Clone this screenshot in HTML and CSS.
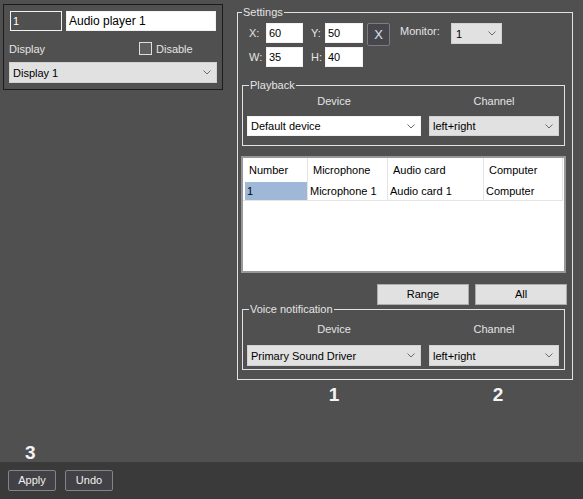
FILE: index.html
```html
<!DOCTYPE html>
<html>
<head>
<meta charset="utf-8">
<link rel="stylesheet" href="styles.css">
</head>
<body>
<div class="app">
  <div class="main">
    <div class="left-col">
      <div class="panel">
        <div class="row">
          <input class="field id-field" value="1" readonly>
          <input class="field name-field" value="Audio player 1" readonly>
        </div>
        <div class="row display-row">
          <span class="display-label">Display</span>
          <span class="checkbox"></span>
          <span class="check-label">Disable</span>
        </div>
        <div class="select display-select">
          <span>Display 1</span>
          <svg class="chev" width="8" height="5" viewBox="0 0 8 5"><polyline points="0.5,0.5 4,4 7.5,0.5" fill="none" stroke="#6a6a6a"/></svg>
        </div>
      </div>
      <div class="num num3">3</div>
    </div>
    <div class="right-col">
      <fieldset class="group settings">
        <legend>Settings</legend>
        <div class="coord-row first">
          <span class="lbl lbl-x">X:</span>
          <input class="field f37" value="60" readonly>
          <span class="lbl lbl-y">Y:</span>
          <input class="field f38" value="50" readonly>
          <div class="xbtn">X</div>
          <span class="monitor-label">Monitor:</span>
          <div class="select monitor-select">
            <span>1</span>
            <svg class="chev" width="8" height="5" viewBox="0 0 8 5"><polyline points="0.5,0.5 4,4 7.5,0.5" fill="none" stroke="#6a6a6a"/></svg>
          </div>
        </div>
        <div class="coord-row">
          <span class="lbl lbl-x">W:</span>
          <input class="field f37" value="35" readonly>
          <span class="lbl lbl-y">H:</span>
          <input class="field f38" value="40" readonly>
        </div>

        <fieldset class="group sub playback">
          <legend>Playback</legend>
          <div class="cols">
            <div class="head">Device</div>
            <div class="head">Channel</div>
            <div class="select white">
              <span>Default device</span>
              <svg class="chev" width="8" height="5" viewBox="0 0 8 5"><polyline points="0.5,0.5 4,4 7.5,0.5" fill="none" stroke="#6a6a6a"/></svg>
            </div>
            <div class="select">
              <span>left+right</span>
              <svg class="chev" width="8" height="5" viewBox="0 0 8 5"><polyline points="0.5,0.5 4,4 7.5,0.5" fill="none" stroke="#6a6a6a"/></svg>
            </div>
          </div>
        </fieldset>

        <div class="table">
          <div class="trow">
            <div class="th first">Number</div>
            <div class="th">Microphone</div>
            <div class="th">Audio card</div>
            <div class="th">Computer</div>
          </div>
          <div class="trow">
            <div class="td first"><span class="sel">1</span></div>
            <div class="td">Microphone 1</div>
            <div class="td">Audio card 1</div>
            <div class="td">Computer</div>
          </div>
        </div>

        <div class="btn-row">
          <div class="btn-light">Range</div>
          <div class="btn-light">All</div>
        </div>

        <fieldset class="group sub voice">
          <legend>Voice notification</legend>
          <div class="cols">
            <div class="head">Device</div>
            <div class="head">Channel</div>
            <div class="select">
              <span>Primary Sound Driver</span>
              <svg class="chev" width="8" height="5" viewBox="0 0 8 5"><polyline points="0.5,0.5 4,4 7.5,0.5" fill="none" stroke="#6a6a6a"/></svg>
            </div>
            <div class="select">
              <span>left+right</span>
              <svg class="chev" width="8" height="5" viewBox="0 0 8 5"><polyline points="0.5,0.5 4,4 7.5,0.5" fill="none" stroke="#6a6a6a"/></svg>
            </div>
          </div>
        </fieldset>
      </fieldset>
      <div class="notes">
        <span class="num n1">1</span>
        <span class="num n2">2</span>
      </div>
    </div>
  </div>
  <div class="bar">
    <div class="dbtn">Apply</div>
    <div class="dbtn">Undo</div>
  </div>
</div>
</body>
</html>
```

FILE: styles.css
```css
* { box-sizing: border-box; }

body {
  margin: 0;
  width: 583px;
  height: 499px;
  overflow: hidden;
  background: #505050;
  font-family: "Liberation Sans", Arial, sans-serif;
  font-size: 11px;
  color: #e4e4e4;
}

.app {
  display: flex;
  flex-direction: column;
  height: 499px;
}

.main {
  height: 462px;
  display: flex;
}

.left-col {
  width: 237px;
  padding: 4px 0 0 3px;
  display: flex;
  flex-direction: column;
}

.panel {
  width: 220px;
  height: 86px;
  border: 1px solid #1c1c1c;
  padding: 6px 0 0 5px;
}

.row {
  display: flex;
  align-items: center;
}

.field {
  height: 20px;
  border: 1px solid #f2f2f2;
  background: #fff;
  color: #000;
  font: inherit;
  padding: 0 2px;
  margin: 0;
  outline: none;
}

.id-field {
  width: 52px;
  margin-left: 1px;
  background: #505050;
  color: #fff;
}

.name-field {
  width: 150px;
  margin-left: 4px;
  font-size: 12px;
}

.display-row {
  margin-top: 11px;
  height: 13px;
}

.display-label {
  width: 130px;
}

.checkbox {
  width: 13px;
  height: 13px;
  border: 1px solid #dedede;
  background: #5e5e5e;
}

.check-label {
  margin-left: 4px;
}

.select {
  display: flex;
  align-items: center;
  justify-content: space-between;
  height: 21px;
  background: #e1e1e1;
  border: 1px solid #d2d2d2;
  color: #000;
  padding: 0 5px 0 3px;
}

.select.white {
  background: #fff;
  border-color: #f4f4f4;
}

.display-select {
  margin-top: 7px;
  width: 208px;
}

.num {
  font-size: 19px;
  font-weight: bold;
  line-height: 20px;
  color: #f4f4f4;
}

.num3 {
  margin-top: auto;
  margin-left: 22px;
  margin-bottom: -1px;
}

.right-col {
  padding-top: 5px;
  display: flex;
  flex-direction: column;
}

.group {
  margin: 0;
  border: 1px solid #e2e2e2;
  min-width: 0;
}

legend {
  padding: 0 1px;
  line-height: 14px;
  font-size: 11px;
  color: #e4e4e4;
}

.settings {
  width: 336px;
  padding: 4px 5px 9px 4px;
}

.coord-row {
  display: flex;
  align-items: flex-start;
  padding-left: 7px;
  height: 20px;
}

.coord-row.first {
  height: 24px;
}

.lbl {
  line-height: 20px;
}

.lbl-x { width: 17px; }
.lbl-y { width: 14px; margin-left: 8px; }

.f37 { width: 37px; }
.f38 { width: 38px; }

.xbtn {
  margin-left: 4px;
  width: 23px;
  height: 23px;
  border: 1px solid #7c7c84;
  border-radius: 2px;
  background: #46464c;
  color: #dde4ee;
  font-size: 13px;
  display: flex;
  align-items: center;
  justify-content: center;
}

.monitor-label {
  margin-left: 10px;
  width: 51px;
  line-height: 17px;
}

.monitor-select {
  width: 51px;
  padding-left: 4px;
}

.sub {
  width: 323px;
}

.sub legend {
  margin-left: 2px;
}

.playback {
  margin-top: 11px;
  padding: 2px 5px 9px 4px;
}

.cols {
  display: grid;
  grid-template-columns: 174px 130px;
  column-gap: 8px;
}

.head {
  text-align: center;
  line-height: 14px;
  margin-bottom: 8px;
}

.playback .select {
  height: 20px;
}

.table {
  margin: 10px 0 0 -1px;
  width: 325px;
  height: 117px;
  border: 2px solid #989898;
  background: #fff;
  color: #000;
}

.trow {
  display: grid;
  grid-template-columns: 65px 80px 96px 79px;
}

.th {
  height: 24px;
  line-height: 24px;
  padding-left: 5px;
  border-right: 1px solid #e4e4e4;
}

.th.first {
  padding-left: 6px;
}

.td {
  height: 19px;
  line-height: 18px;
  padding-left: 2px;
  border-right: 1px solid #e4e4e4;
  border-bottom: 1px solid #e4e4e4;
}

.td.first {
  padding-left: 2px;
}

.sel {
  display: block;
  height: 18px;
  background: #9fb8d8;
  padding-left: 2px;
}

.btn-row {
  display: flex;
  justify-content: flex-end;
  gap: 6px;
  margin-top: 11px;
}

.btn-light {
  width: 92px;
  height: 21px;
  background: #e1e1e1;
  border: 1px solid #adadad;
  color: #000;
  text-align: center;
  line-height: 19px;
}

.voice {
  margin-top: -3px;
  padding: 6px 5px 3px 4px;
}

.voice .head {
  margin-bottom: 9px;
}

.notes {
  display: flex;
  margin-top: 4px;
}

.n1 {
  margin-left: 87px;
  width: 20px;
  text-align: center;
  line-height: 22px;
}

.n2 {
  margin-left: 144px;
  width: 20px;
  text-align: center;
  line-height: 22px;
}

.bar {
  height: 37px;
  background: #3b3a3b;
  display: flex;
  gap: 9px;
  padding: 8px 0 0 8px;
}

.dbtn {
  width: 48px;
  height: 21px;
  border: 1px solid #838388;
  border-radius: 2px;
  background: #424246;
  color: #f0f0f0;
  text-align: center;
  line-height: 19px;
}
```
